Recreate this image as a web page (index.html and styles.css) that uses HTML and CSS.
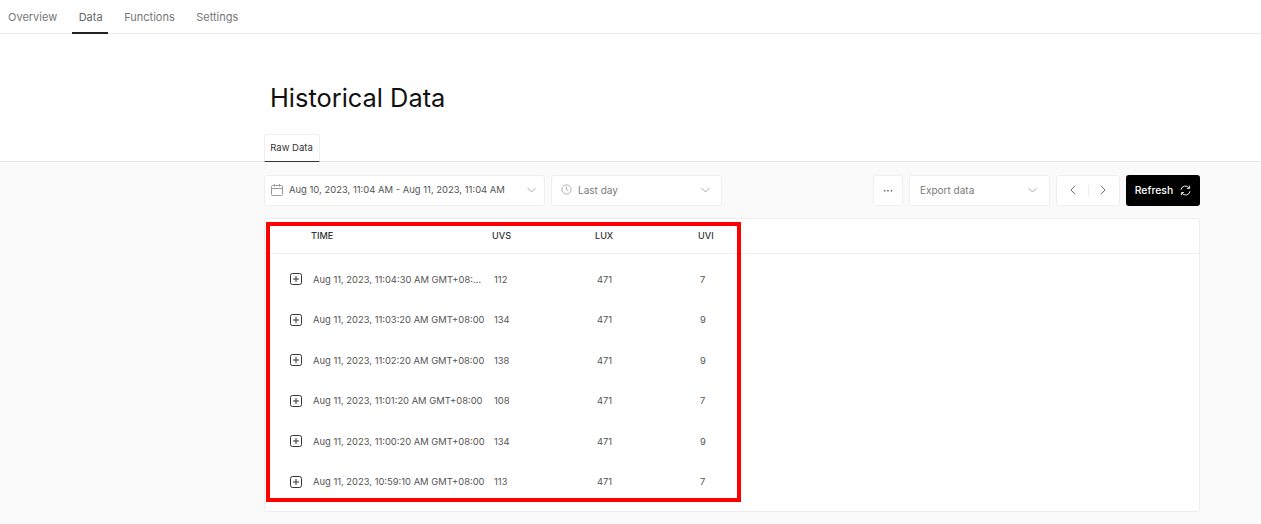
FILE: index.html
```html
<!DOCTYPE html>
<html lang="en">
<head>
  <meta charset="UTF-8" />
  <meta name="viewport" content="width=device-width, initial-scale=1.0"/>
  <title>Historical Data</title>
  <link rel="stylesheet" href="styles.css">
</head>
<body>

  <nav class="topnav">
    <a href="#">Overview</a>
    <a href="#" class="active">Data</a>
    <a href="#">Functions</a>
    <a href="#">Settings</a>
  </nav>

  <header class="page-head">
    <h1>Historical Data</h1>
    <div class="subtabs">
      <a href="#" class="subtab">Raw Data</a>
    </div>
  </header>

  <main class="content">
    <div class="toolbar">
      <div class="select date-range">
        <svg class="ico-left" width="12" height="12" viewBox="0 0 12 12" fill="none" stroke="#9a9a9a"><rect x="0.5" y="1.5" width="11" height="10" rx="1"/><path d="M0.5 4.5h11M3.5 0v2.5M8.5 0v2.5"/></svg>
        <span class="value">Aug 10, 2023, 11:04 AM - Aug 11, 2023, 11:04 AM</span>
        <svg class="chev" width="9" height="6" viewBox="0 0 9 6" fill="none" stroke="#a8a8a8"><path d="M0.5 1l4 4 4-4"/></svg>
      </div>
      <div class="select range">
        <svg class="ico-left" width="11" height="11" viewBox="0 0 12 12" fill="none" stroke="#a8a8a8"><circle cx="6" cy="6" r="5"/><path d="M6 3v3.2l2 1.2"/></svg>
        <span class="value muted">Last day</span>
        <svg class="chev" width="9" height="6" viewBox="0 0 9 6" fill="none" stroke="#a8a8a8"><path d="M0.5 1l4 4 4-4"/></svg>
      </div>
      <div class="spacer"></div>
      <button class="box more">···</button>
      <div class="select export">
        <span class="value muted">Export data</span>
        <svg class="chev" width="9" height="6" viewBox="0 0 9 6" fill="none" stroke="#a8a8a8"><path d="M0.5 1l4 4 4-4"/></svg>
      </div>
      <div class="box pager">
        <svg width="6" height="10" viewBox="0 0 6 10" fill="none" stroke="#6f6f6f"><path d="M5 0.8L1 5l4 4.2"/></svg>
        <span class="pager-sep"></span>
        <svg width="6" height="10" viewBox="0 0 6 10" fill="none" stroke="#6f6f6f"><path d="M1 0.8L5 5l-4 4.2"/></svg>
      </div>
      <button class="refresh">Refresh
        <svg width="11" height="11" viewBox="0 0 12 12" fill="none" stroke="#fff"><path d="M1 5.2A5 5 0 0 1 10 3.2M11 6.8A5 5 0 0 1 2 8.8"/><path d="M10.5 0.8v2.9H7.6M1.5 11.2V8.3h2.9"/></svg>
      </button>
    </div>

    <section class="card">
      <div class="row head">
        <span></span><span>TIME</span><span>UVS</span><span>LUX</span><span>UVI</span>
      </div>
      <div class="body">
        <div class="row">
          <svg class="expand" width="12" height="12" viewBox="0 0 12 12" fill="none" stroke="#333"><rect x="0.5" y="0.5" width="11" height="11" rx="2"/><path d="M3 6h6M6 3v6"/></svg>
          <span class="time">Aug 11, 2023, 11:04:30 AM GMT+08:00</span><span>112</span><span>471</span><span>7</span>
        </div>
        <div class="row">
          <svg class="expand" width="12" height="12" viewBox="0 0 12 12" fill="none" stroke="#333"><rect x="0.5" y="0.5" width="11" height="11" rx="2"/><path d="M3 6h6M6 3v6"/></svg>
          <span class="time">Aug 11, 2023, 11:03:20 AM GMT+08:00</span><span>134</span><span>471</span><span>9</span>
        </div>
        <div class="row">
          <svg class="expand" width="12" height="12" viewBox="0 0 12 12" fill="none" stroke="#333"><rect x="0.5" y="0.5" width="11" height="11" rx="2"/><path d="M3 6h6M6 3v6"/></svg>
          <span class="time">Aug 11, 2023, 11:02:20 AM GMT+08:00</span><span>138</span><span>471</span><span>9</span>
        </div>
        <div class="row">
          <svg class="expand" width="12" height="12" viewBox="0 0 12 12" fill="none" stroke="#333"><rect x="0.5" y="0.5" width="11" height="11" rx="2"/><path d="M3 6h6M6 3v6"/></svg>
          <span class="time">Aug 11, 2023, 11:01:20 AM GMT+08:00</span><span>108</span><span>471</span><span>7</span>
        </div>
        <div class="row">
          <svg class="expand" width="12" height="12" viewBox="0 0 12 12" fill="none" stroke="#333"><rect x="0.5" y="0.5" width="11" height="11" rx="2"/><path d="M3 6h6M6 3v6"/></svg>
          <span class="time">Aug 11, 2023, 11:00:20 AM GMT+08:00</span><span>134</span><span>471</span><span>9</span>
        </div>
        <div class="row">
          <svg class="expand" width="12" height="12" viewBox="0 0 12 12" fill="none" stroke="#333"><rect x="0.5" y="0.5" width="11" height="11" rx="2"/><path d="M3 6h6M6 3v6"/></svg>
          <span class="time">Aug 11, 2023, 10:59:10 AM GMT+08:00</span><span>113</span><span>471</span><span>7</span>
        </div>
      </div>
    </section>
  </main>

  <!-- annotation drawn on top of the screenshot -->
  <div class="highlight"></div>

</body>
</html>
```

FILE: styles.css
```css
:root {
  --bg: #fafafa;
  --line: #ececec;
  --text: #4a4a4a;
  --muted: #7b7b7b;
}
* { box-sizing: border-box; margin:0; padding:0; font-family:'Inter', 'Liberation Sans', sans-serif; }
html, body { height:100%; overflow:hidden; }
body { background: var(--bg); position:relative; color: var(--text); }

.topnav {
  display:flex; height:34px; padding-left:1px;
  background:#fff; border-bottom:1px solid var(--line);
}
.topnav a {
  display:block; height:34px; padding:0 7px; margin-right:7.5px;
  font-size:11px; line-height:35px;
  color:#777; text-decoration:none;
}
.topnav a.active { color:#666; border-bottom:2px solid #222; padding-right:5px; margin-right:9.5px; }

.page-head {
  height:128px; padding:0 0 0 264px;
  background:#fff; border-bottom:1px solid #e8e8e8;
  display:flex; flex-direction:column;
}
.page-head h1 {
  margin-top:48px; padding-left:6px;
  font-size:25.4px; line-height:32px; font-weight:400; color:#111;
}
.subtabs { margin-top:auto; display:flex; }
.subtab {
  display:block; width:56px; height:28px; margin-bottom:-1px; padding-right:1px;
  border:1px solid #f0f0f0; border-bottom:1px solid #333; border-radius:3px 3px 0 0;
  text-align:center; font-size:9.5px; line-height:26px; color:#333; text-decoration:none;
}

.content { padding:13px 61px 0 264px; }
.toolbar { display:flex; gap:6px; height:31px; }
.spacer { flex:1; }
.select, .box {
  display:flex; align-items:center; height:31px; padding-bottom:2px;
  background:#fff; border:1px solid #efefef; border-radius:3px;
}
.select { padding-left:6px; padding-right:8px; font-size:10px; }
.select .value { flex:1; color:#555; white-space:nowrap; }
.select .value.muted { color: var(--muted); }
.ico-left { margin-right:6px; flex:none; }
.chev { flex:none; }
.date-range { width:281px; font-size:9.45px; }
.range { width:171px; padding-left:9px; padding-right:11px; }
.export { width:141px; padding-left:10px; padding-right:12px; }
.more { width:30px; justify-content:center; font-size:10px; font-weight:700; color:#666; }
.pager { width:64px; justify-content:space-between; padding:0 13px 1px; }
.pager-sep { width:1px; height:11px; background:#efefef; }
.refresh {
  display:flex; align-items:center; justify-content:center; gap:7px;
  width:74px; height:31px; padding-bottom:1px; border:none; border-radius:3px;
  background:#000; color:#fff; font-size:10.4px; font-weight:500;
}

.card {
  height:294px; margin-top:12px;
  background:#fff; border:1px solid #ededed; border-radius:3px;
}
.row {
  display:grid; grid-template-columns:46px 181px 103px 103px 103px;
  align-items:center;
}
.head {
  height:35px; padding-bottom:2px; border-bottom:1px solid #ededed;
  font-size:9.1px; font-weight:500; color:#333;
}
.body { padding-top:5px; }
.body .row { height:40.5px; font-size:9.4px; color:#555; }
.body .row span { padding-left:2px; }
.expand { margin-left:25px; }
.body .row .time { overflow:hidden; white-space:nowrap; text-overflow:ellipsis; padding-right:7.25px; }

.highlight {
  position:absolute; left:266px; top:222px; width:475px; height:280px;
  border:4px solid #f00; pointer-events:none;
}
```
